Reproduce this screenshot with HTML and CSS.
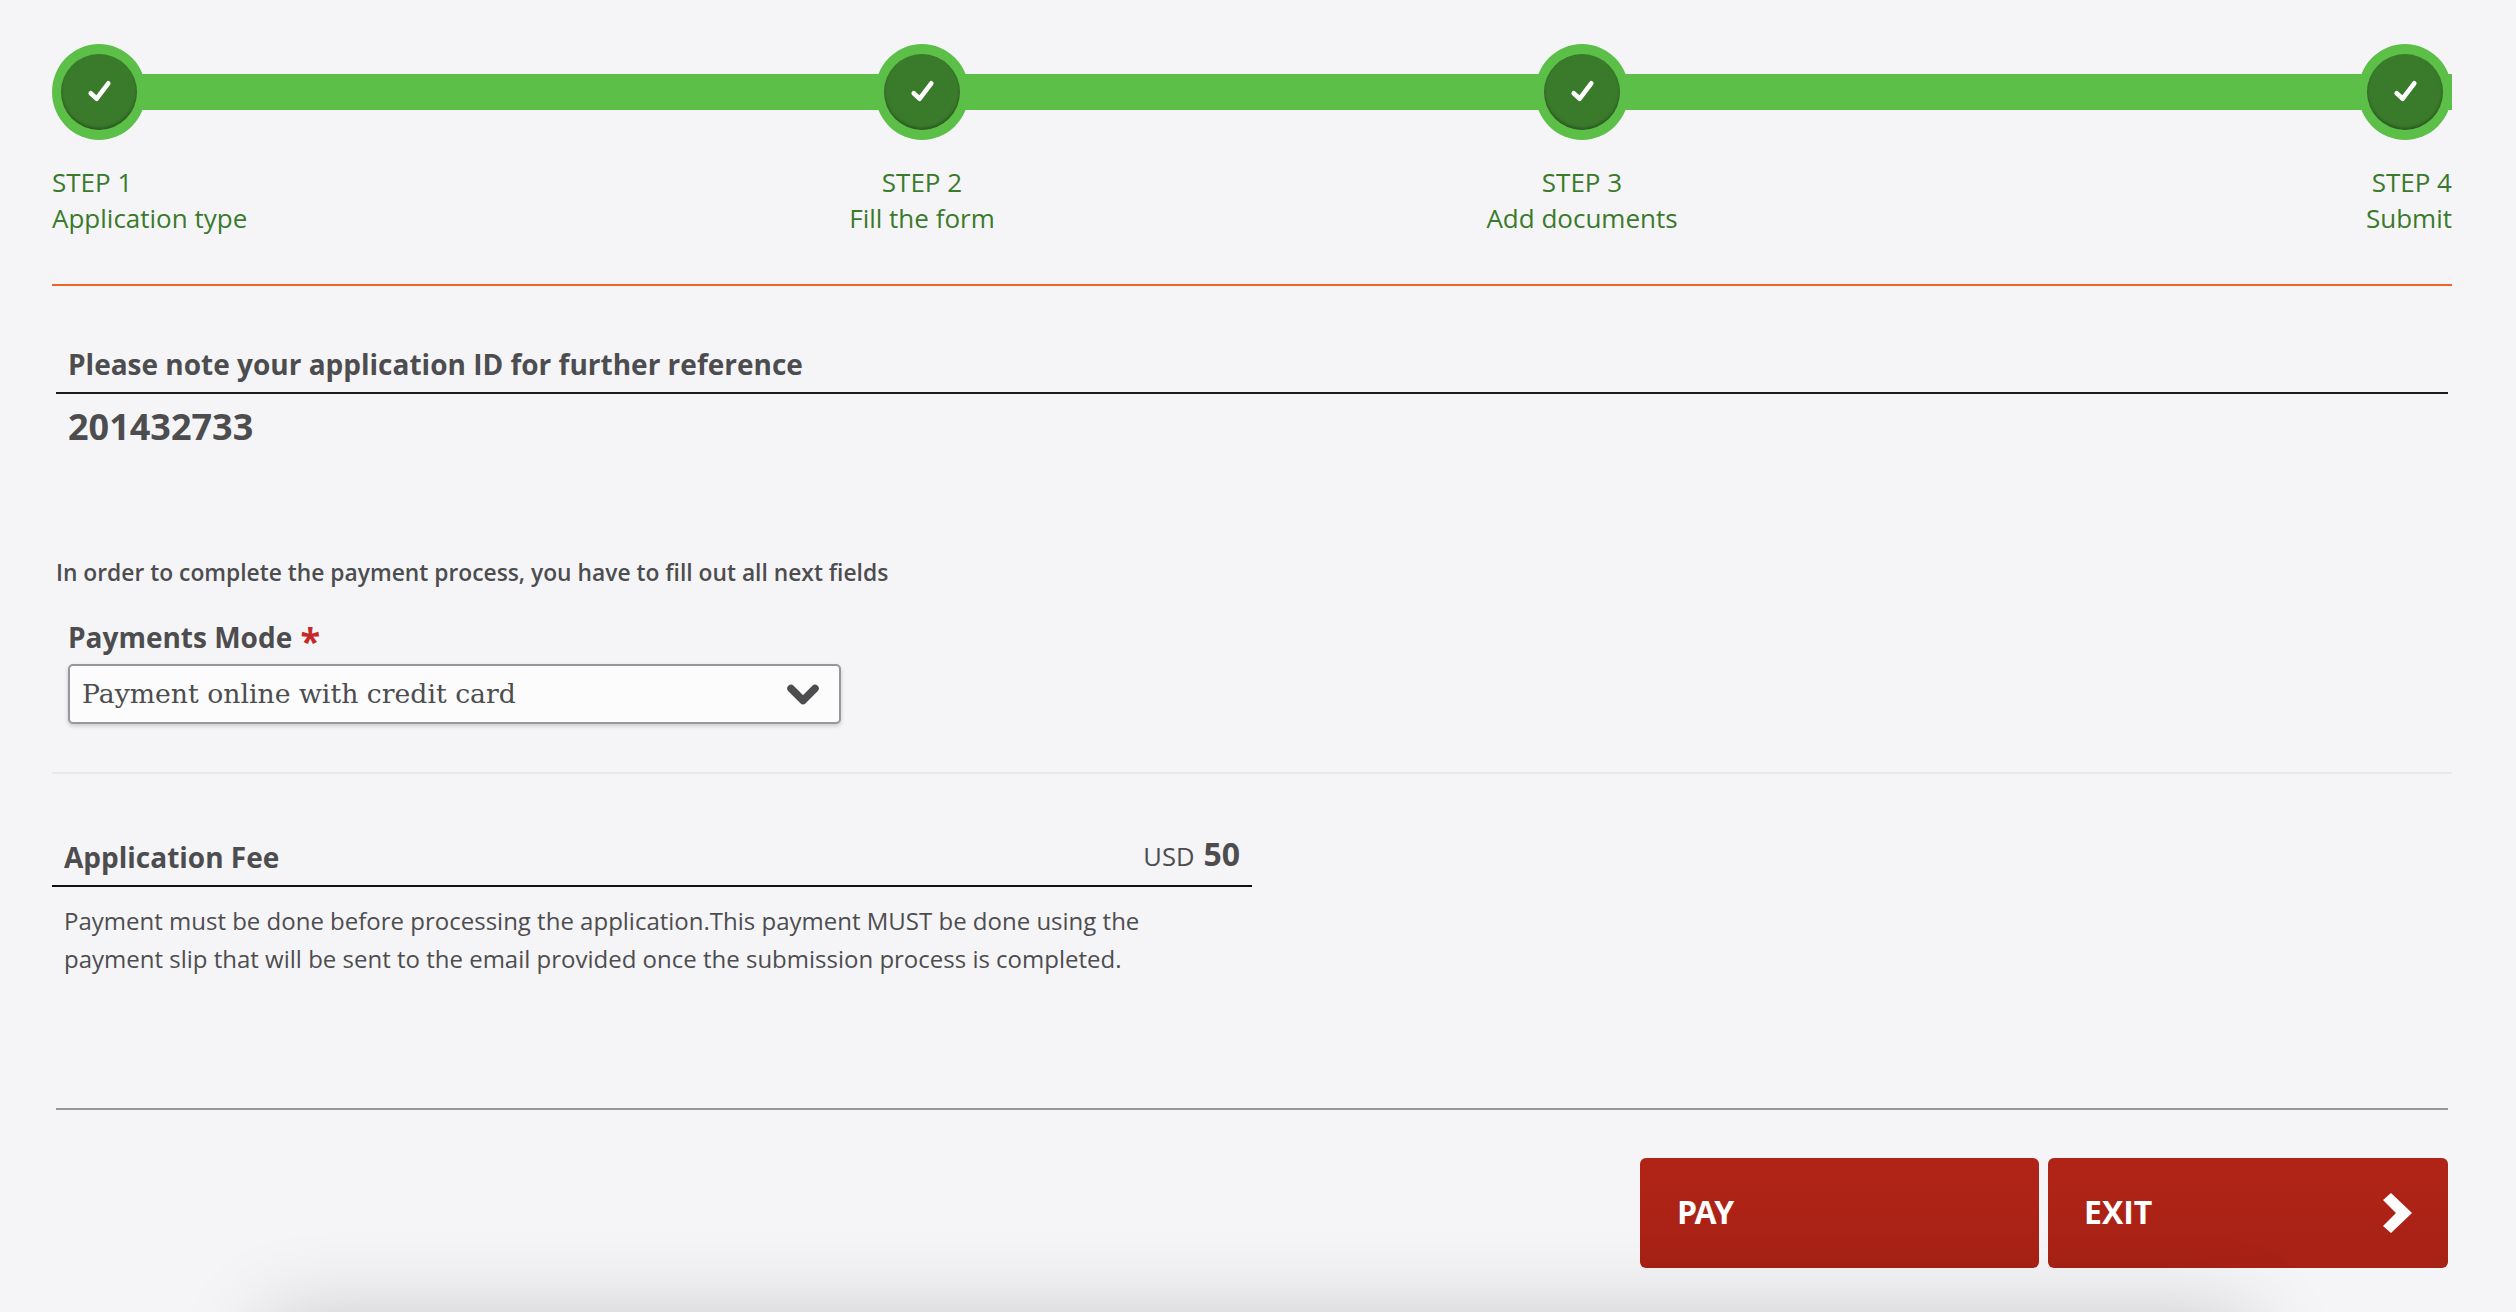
FILE: index.html
```html
<!DOCTYPE html>
<html lang="en">
<head>
<meta charset="utf-8">
<title>Application payment</title>
<link rel="stylesheet" href="styles.css">
</head>
<body>
<main class="page">
  <ol class="stepper">
    <li class="step step-start">
      <span class="dot"><svg class="tick" viewBox="0 0 24 24"><path d="M3.7 13.3 9.7 18.7 21.3 3.3"/></svg></span>
      <span class="step-num">STEP 1</span>
      <span class="step-name">Application type</span>
    </li>
    <li class="step step-mid">
      <span class="dot"><svg class="tick" viewBox="0 0 24 24"><path d="M3.7 13.3 9.7 18.7 21.3 3.3"/></svg></span>
      <span class="step-num">STEP 2</span>
      <span class="step-name">Fill the form</span>
    </li>
    <li class="step step-mid">
      <span class="dot"><svg class="tick" viewBox="0 0 24 24"><path d="M3.7 13.3 9.7 18.7 21.3 3.3"/></svg></span>
      <span class="step-num">STEP 3</span>
      <span class="step-name">Add documents</span>
    </li>
    <li class="step step-end">
      <span class="dot"><svg class="tick" viewBox="0 0 24 24"><path d="M3.7 13.3 9.7 18.7 21.3 3.3"/></svg></span>
      <span class="step-num">STEP 4</span>
      <span class="step-name">Submit</span>
    </li>
  </ol>

  <section class="app-id">
    <h2 class="app-id-title">Please note your application ID for further reference</h2>
    <p class="app-id-value">201432733</p>
  </section>

  <p class="notice">In order to complete the payment process, you have to fill out all next fields</p>

  <div class="field">
    <label class="field-label">Payments Mode <span class="req">*</span></label>
    <div class="select">
      <span class="select-text">Payment online with credit card</span>
      <svg class="select-arrow" viewBox="0 0 32 21"><path d="M4 4.5 16 16.5 28 4.5"/></svg>
    </div>
  </div>

  <section class="fee">
    <div class="fee-head">
      <h3 class="fee-title">Application Fee</h3>
      <div class="fee-amount"><span class="fee-cur">USD</span><strong class="fee-val">50</strong></div>
    </div>
    <p class="fee-text">Payment must be done before processing the application.This payment MUST be done using the payment slip that will be sent to the email provided once the submission process is completed.</p>
  </section>

  <div class="actions">
    <button class="btn btn-pay" type="button"><span class="btn-label">PAY</span></button>
    <button class="btn" type="button"><span class="btn-label">EXIT</span>
      <svg class="btn-arrow" viewBox="0 0 29 40"><polygon points="0,7 8,0 29,20 8,40 0,33 13,20"/></svg>
    </button>
  </div>
</main>
<div class="bottom-shadow"></div>
</body>
</html>
```

FILE: styles.css
```css
* { box-sizing: border-box; }
html, body { height: 100%; }
body {
  margin: 0;
  background: #f5f5f8;
  color: #4d4d4f;
  font-family: "Open Sans", "Liberation Sans", sans-serif;
  overflow: hidden;
  position: relative;
}
.page {
  padding: 44px 64px 0 52px;
}
.stepper {
  position: relative;
  list-style: none;
  margin: 0;
  padding: 0 0 48px;
  display: grid;
  grid-template-columns: 9fr 11fr 11fr 9fr;
  border-bottom: 2px solid #ee6428;
}
.stepper::before {
  content: "";
  position: absolute;
  left: 46px;
  right: 0;
  top: 30px;
  height: 36px;
  background: #5cbf47;
}
.step {
  position: relative;
  display: flex;
  flex-direction: column;
  color: #3a7a2b;
  font-size: 26px;
  line-height: 36px;
}
.step-start { align-items: flex-start; }
.step-mid { align-items: center; text-align: center; }
.step-end { align-items: flex-end; text-align: right; }
.dot {
  width: 94px;
  height: 96px;
  margin-bottom: 24px;
  border-radius: 50%;
  background: #5cbf47;
  display: flex;
  align-items: center;
  justify-content: center;
}
.tick {
  width: 76px;
  height: 76px;
  padding: 26px;
  border-radius: 50%;
  background: #3a7a2b;
  box-shadow: inset 0 -2px 3px rgba(0, 0, 0, .28);
  fill: none;
  stroke: #fff;
  stroke-width: 4.6;
  stroke-linecap: round;
  stroke-linejoin: round;
  overflow: visible;
}
.app-id {
  margin: 58px 4px 0;
}
.app-id-title {
  margin: 0;
  padding: 0 12px 8px;
  font-size: 28px;
  font-weight: 700;
  line-height: 40px;
  border-bottom: 2px solid #1a1a1c;
}
.app-id-value {
  margin: 9px 0 0;
  padding: 0 12px;
  font-size: 36px;
  font-weight: 700;
  line-height: 48px;
}
.notice {
  margin: 107px 0 0 4px;
  font-size: 22.8px;
  font-weight: 600;
  line-height: 30px;
}
.field {
  margin: 31px 0 0 16px;
}
.field-label {
  display: block;
  font-size: 28px;
  font-weight: 700;
  line-height: 36px;
}
.req {
  margin-left: 1px;
  color: #c62828;
  font-size: 36px;
  line-height: 0;
  vertical-align: -6px;
}
.select {
  width: 773px;
  height: 60px;
  margin-top: 9px;
  padding: 0 20px 0 12px;
  display: flex;
  align-items: center;
  justify-content: space-between;
  background: #fcfcfc;
  border: 2px solid #98989c;
  border-radius: 5px;
  box-shadow: 0 2px 4px rgba(0, 0, 0, .18);
}
.select-text {
  padding-bottom: 2px;
  font-family: "DejaVu Serif", "Liberation Serif", serif;
  font-size: 26.7px;
  color: #4d4d4f;
}
.select-arrow {
  width: 32px;
  height: 21px;
  fill: none;
  stroke: #4d4d4f;
  stroke-width: 7.5;
  stroke-linecap: round;
  stroke-linejoin: round;
}
.fee {
  margin-top: 48px;
  padding-top: 49px;
  border-top: 2px solid #e9e9ec;
}
.fee-head, .fee-text {
  width: 1200px;
}
.fee-head {
  display: flex;
  align-items: center;
  justify-content: space-between;
  height: 64px;
  padding: 5px 12px 0;
  border-bottom: 2px solid #111;
}
.fee-title {
  margin: 0;
  font-size: 28px;
  font-weight: 700;
}
.fee-amount {
  display: flex;
  align-items: baseline;
  gap: 9px;
  margin-bottom: 6px;
}
.fee-cur {
  font-size: 25.5px;
}
.fee-val {
  font-size: 32px;
}
.fee-text {
  margin: 15px 0 0;
  padding: 0 12px;
  font-size: 24px;
  line-height: 38px;
}
.actions {
  margin: 130px 4px 0;
  padding-top: 48px;
  border-top: 2px solid #98989c;
  display: flex;
  justify-content: flex-end;
  gap: 9px;
}
.btn {
  width: 400px;
  height: 110px;
  padding: 0 36px;
  display: flex;
  align-items: center;
  justify-content: space-between;
  border: 0;
  border-radius: 6px;
  background: linear-gradient(#b02417, #a82115);
  color: #fff;
  font-family: inherit;
  font-size: 32px;
  font-weight: 700;
}
.btn-pay {
  width: 399px;
  padding-left: 37px;
}
.btn-pay .btn-label {
  letter-spacing: -2.5px;
}
.btn-label {
  margin-bottom: 4px;
}
.btn-arrow {
  width: 29px;
  height: 40px;
  fill: #fff;
}
.bottom-shadow {
  position: absolute;
  left: 326px;
  right: 326px;
  bottom: 0;
  height: 0;
  box-shadow: 0 68px 90px 60px rgba(0, 0, 0, .2);
}
```
